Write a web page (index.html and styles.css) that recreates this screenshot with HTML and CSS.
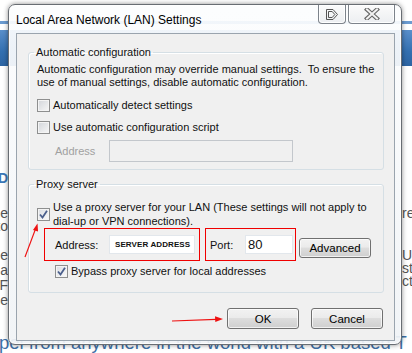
FILE: index.html
```html
<!DOCTYPE html>
<html lang="en">

<head>
    <meta charset="UTF-8">
    <title>Local Area Network (LAN) Settings</title>
    <link rel="stylesheet" href="styles.css">
</head>

<body>

    <!-- the web page behind the dialog -->
    <div class="page">
        <div class="page-top">
            <div class="stripe"></div>
            <div class="band"></div>
        </div>
        <div class="page-mid">
            <div class="col-left">
                <p class="blue">ADD</p>
                <p class="pair">the<br>to</p>
                <p class="four">free<br>a<br>SF<br>use</p>
            </div>
            <div class="col-right">
                <p class="single">re</p>
                <p class="three">Ur<br>st<br>ct</p>
            </div>
        </div>
        <p class="page-foot">pel from anywhere in the world with a UK based T</p>
    </div>

    <div class="dialog">
        <div class="titlebar">
            <span class="title">Local Area Network (LAN) Settings</span>
            <div class="caption-btns">
                <div class="cap-btn cap-help">
                    <svg width="14" height="11" viewBox="0 0 14 11">
                        <path d="M1.5 0.5 H8 L12.5 5.5 L8 10.5 H1.5 Z" fill="none" stroke="#555" stroke-width="1" />
                        <path d="M3.5 2.5 H7.2 L9.8 5.5 L7.2 8.5 H3.5 Z" fill="none" stroke="#555" stroke-width="1" />
                    </svg>
                </div>
                <div class="cap-btn cap-close">
                    <svg width="16" height="12" viewBox="0 0 16 12">
                        <path d="M3 1.5 L13 10.5 M13 1.5 L3 10.5" stroke="#666" stroke-width="4.2" stroke-linecap="square" />
                        <path d="M3 1.5 L13 10.5 M13 1.5 L3 10.5" stroke="#f2f2f2" stroke-width="2" stroke-linecap="square" />
                    </svg>
                </div>
            </div>
        </div>

        <div class="client">
            <fieldset class="group group-auto">
                <legend>Automatic configuration</legend>
                <p class="note">Automatic configuration may override manual settings.&nbsp; To ensure the<br>use of manual settings, disable automatic configuration.</p>
                <div class="check-row row-detect">
                    <span class="cb"></span>
                    <span>Automatically detect settings</span>
                </div>
                <div class="check-row row-script">
                    <span class="cb"></span>
                    <span>Use automatic configuration script</span>
                </div>
                <div class="addr-row">
                    <span class="addr-label disabled">Address</span>
                    <span class="edit edit-disabled"></span>
                </div>
            </fieldset>

            <fieldset class="group group-proxy">
                <legend>Proxy server</legend>
                <div class="check-row row-proxy">
                    <span class="cb checked">
                        <svg width="11" height="11" viewBox="0 0 11 11">
                            <path d="M2 5.5 L4.5 8.5 L9 1.8" fill="none" stroke="#4b5f8c" stroke-width="1.8" />
                        </svg>
                    </span>
                    <span>Use a proxy server for your LAN (These settings will not apply to<br>dial-up or VPN connections).</span>
                </div>
                <div class="proxy-row">
                    <div class="mark mark-addr">
                        <span class="addr-label">Address:</span>
                        <span class="edit edit-addr">SERVER ADDRESS</span>
                    </div>
                    <div class="mark mark-port">
                        <span class="port-label">Port:</span>
                        <span class="edit edit-port">80</span>
                    </div>
                    <div class="btn btn-adv">Advanced</div>
                </div>
                <div class="check-row row-bypass">
                    <span class="cb checked">
                        <svg width="11" height="11" viewBox="0 0 11 11">
                            <path d="M2 5.5 L4.5 8.5 L9 1.8" fill="none" stroke="#4b5f8c" stroke-width="1.8" />
                        </svg>
                    </span>
                    <span>Bypass proxy server for local addresses</span>
                </div>
            </fieldset>

            <div class="buttons">
                <div class="btn">OK</div>
                <div class="btn">Cancel</div>
            </div>
        </div>
    </div>

    <!-- red annotation arrows drawn over the screenshot -->
    <svg class="arrows" width="412" height="353" viewBox="0 0 412 353">
        <path d="M25 257 L35.5 229" stroke="#ee1111" stroke-width="1.2" fill="none" />
        <path d="M37.5 223.5 L33 230 L38 231.5 Z" fill="#ee1111" />
        <path d="M172 321 L216 319.3" stroke="#ee1111" stroke-width="1.2" fill="none" />
        <path d="M223 319 L215 316.3 L215.3 322 Z" fill="#ee1111" />
    </svg>

</body>

</html>
```

FILE: styles.css
```css
* {
    margin: 0;
    box-sizing: border-box;
}

body {
    width: 412px;
    height: 353px;
    overflow: hidden;
    position: relative;
    background-color: white;
    font-family: "Liberation Sans", Arial, sans-serif;
    font-size: 12px;
    color: #111;
}

/* page behind */

.page {
    height: 353px;
    display: flex;
    flex-direction: column;
    background-color: white;
}

.page-top {
    height: 66px;
}

.stripe {
    margin-top: 21px;
    height: 3px;
    background-color: #6b9bd0;
}

.band {
    margin-top: 6px;
    height: 36px;
    background: linear-gradient(#5a8fcb, #3470b0 60%, #2d64a2);
}

.page-mid {
    height: 272px;
    display: flex;
    justify-content: space-between;
    font-size: 14px;
    color: #555;
}

.col-left {
    width: 8px;
    display: flex;
    flex-direction: column;
    align-items: flex-end;
}

.col-left p,
.col-right p {
    white-space: nowrap;
}

.col-left .blue {
    margin-top: 104px;
    color: #3b78b8;
    font-weight: 700;
    line-height: 16px;
}

.col-left .pair {
    margin-top: 21px;
    line-height: 13px;
    text-align: right;
}

.col-left .four {
    margin-top: 15px;
    line-height: 15px;
    text-align: right;
}

.col-right {
    width: 10px;
}

.col-right .single {
    margin-top: 139px;
    line-height: 16px;
}

.col-right .three {
    margin-top: 28px;
    line-height: 13px;
}

.page-foot {
    margin-top: 4px;
    margin-left: -1px;
    font-size: 18.5px;
    line-height: 20px;
    color: #3d6fa6;
    white-space: nowrap;
}

/* dialog */

.dialog {
    position: absolute;
    left: 8px;
    top: 4px;
    width: 394px;
    height: 341px;
    display: flex;
    flex-direction: column;
    padding: 0 6px 3px 7px;
    border: 1px solid #686d73;
    border-radius: 7px;
    background: linear-gradient(rgba(252, 253, 254, 0.93), rgba(240, 243, 246, 0.93));
    box-shadow: 0 0 5px rgba(0, 0, 0, 0.45), inset 0 0 0 1px rgba(255, 255, 255, 0.8);
}

.titlebar {
    height: 28px;
    display: flex;
    justify-content: space-between;
    align-items: flex-start;
}

.title {
    margin-top: 8px;
    line-height: 14px;
    color: #000;
}

.caption-btns {
    display: flex;
    gap: 2px;
}

.cap-btn {
    height: 19px;
    display: flex;
    align-items: center;
    justify-content: center;
    border: 1px solid #7d838b;
    border-top: none;
    border-radius: 0 0 4px 4px;
    background: linear-gradient(#fbfbfb, #eceef1);
    box-shadow: inset 0 0 0 1px rgba(255, 255, 255, 0.9);
}

.cap-help {
    width: 28px;
}

.cap-close {
    width: 47px;
}

.client {
    flex: 1;
    padding: 0 10px 0 11px;
    border: 1px solid #9aa4ae;
    background-color: #f0f0f0;
    font-size: 11px;
    white-space: nowrap;
}

.group {
    min-width: 0;
    padding: 0 8px 7px 8px;
    border: 1px solid #d5dfe5;
    border-radius: 3px;
    box-shadow: 1px 1px 0 white inset;
}

.group legend {
    margin-left: -3px;
    padding: 0 2px;
    line-height: 14px;
}

.group-auto {
    margin-top: 11px;
}

.group-proxy {
    margin-top: 7px;
    padding-bottom: 14px;
}

.note {
    margin-top: 4px;
    line-height: 13px;
}

.check-row {
    display: flex;
    align-items: center;
    gap: 3px;
    line-height: 14px;
}

.row-detect {
    margin-top: 9px;
}

.row-script {
    margin-top: 8px;
}

.row-proxy {
    margin-top: 9px;
}

.row-bypass {
    margin-top: 3px;
    padding-left: 18px;
}

.cb {
    width: 13px;
    height: 13px;
    flex-shrink: 0;
    display: flex;
    align-items: center;
    justify-content: center;
    border: 1px solid #8e8f8f;
    background: linear-gradient(135deg, #d2d5da, #f7f7f7);
    box-shadow: inset 0 0 0 1px #f4f4f4;
}

.cb.checked {
    background: linear-gradient(135deg, #dadde2, #fafafa);
}

.addr-row {
    margin-top: 6px;
    display: flex;
    align-items: center;
    padding-left: 18px;
}

.addr-label {
    width: 54px;
    flex-shrink: 0;
}

.disabled {
    color: #a0a0a0;
}

.edit {
    height: 19px;
    flex-shrink: 0;
    display: flex;
    align-items: center;
    padding-left: 5px;
    border: 1px solid #e2e7ec;
    background-color: white;
}

.edit-disabled {
    width: 184px;
    height: 22px;
    border-color: #c3c7cc;
    background-color: #f0f0f0;
}

.proxy-row {
    height: 33px;
    display: flex;
    align-items: center;
    padding-left: 7px;
}

.mark {
    height: 33px;
    flex-shrink: 0;
    display: flex;
    align-items: center;
    border: 1px solid #f00000;
}

.mark-addr {
    width: 156px;
    padding-left: 10px;
}

.edit-addr {
    width: 86px;
    font-size: 8px;
    font-weight: 700;
    letter-spacing: 0.1px;
}

.mark-port {
    width: 91px;
    margin-left: 5px;
    padding-left: 4px;
}

.port-label {
    width: 35px;
    flex-shrink: 0;
}

.edit-port {
    width: 48px;
    padding-left: 2px;
    font-size: 13px;
}

.btn {
    width: 72px;
    height: 21px;
    flex-shrink: 0;
    display: flex;
    align-items: center;
    justify-content: center;
    border: 1px solid #707070;
    border-radius: 3px;
    background: linear-gradient(#f2f2f2, #ebebeb 45%, #dddddd 50%, #cfcfcf);
    box-shadow: inset 0 0 0 1px rgba(255, 255, 255, 0.7);
    color: #000;
    font-size: 11.5px;
}

.btn-adv {
    height: 20px;
    margin-left: 3px;
    align-self: flex-end;
    margin-bottom: 3px;
}

.buttons {
    margin-top: 15px;
    display: flex;
    justify-content: flex-end;
    gap: 12px;
    padding-right: 1px;
}

.arrows {
    position: absolute;
    left: 0;
    top: 0;
    pointer-events: none;
}
```
